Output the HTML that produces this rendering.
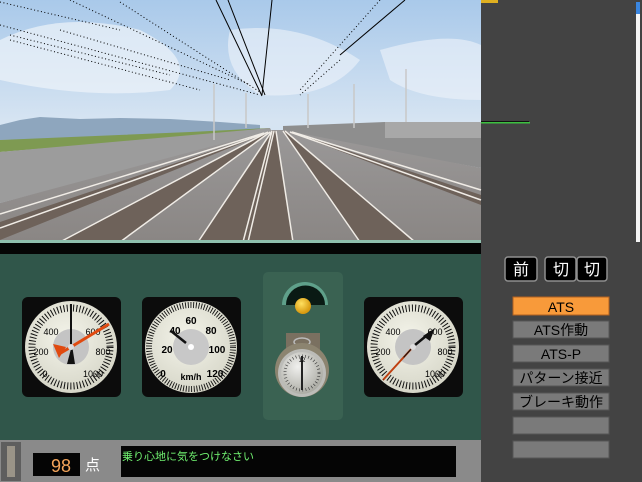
<!DOCTYPE html>
<html><head><meta charset="utf-8"><style>
html,body{margin:0;padding:0;background:#434343;}
svg{display:block}
text{font-family:"Liberation Sans","Noto Sans CJK JP",sans-serif}
</style></head><body>
<svg width="642" height="482" viewBox="0 0 642 482" xmlns="http://www.w3.org/2000/svg">
<defs>
<linearGradient id="sky" x1="0" y1="0" x2="0" y2="1">
<stop offset="0" stop-color="#a9c9ea"/><stop offset="0.5" stop-color="#d6e4f2"/><stop offset="1" stop-color="#c8dcee"/></linearGradient>
<linearGradient id="gnd" x1="0" y1="0" x2="0" y2="1">
<stop offset="0" stop-color="#9a9898"/><stop offset="1" stop-color="#8a8684"/></linearGradient>
<radialGradient id="face" cx="0.45" cy="0.4" r="0.6"><stop offset="0" stop-color="#f4f4ea"/><stop offset="1" stop-color="#d6d6c8"/></radialGradient>
<radialGradient id="lamp" cx="0.4" cy="0.35" r="0.6"><stop offset="0" stop-color="#ffe060"/><stop offset="1" stop-color="#d89a10"/></radialGradient>
<radialGradient id="watch" cx="0.4" cy="0.35" r="0.7"><stop offset="0" stop-color="#f0f0ee"/><stop offset="1" stop-color="#a8a8a0"/></radialGradient>
</defs>
<rect x="0" y="0" width="642" height="482" fill="#434343"/>
<rect x="481" y="0" width="17" height="3" fill="#e0b020"/>
<rect x="481" y="121" width="48" height="1" fill="#111"/>
<rect x="481" y="122" width="49" height="1.5" fill="#3cc040"/>
<rect x="636" y="2" width="4" height="240" fill="#f4f4f4"/>
<rect x="636" y="2" width="4" height="12" fill="#3a86e0"/>
<!-- scene -->
<rect x="0" y="0" width="481" height="242" fill="url(#sky)"/>
<path d="M0 40 Q60 10 140 30 Q200 60 170 90 Q90 100 0 80Z" fill="#eef4fa" opacity="0.7"/>
<path d="M230 30 Q300 20 360 60 Q330 100 260 95 Q220 70 230 30Z" fill="#eef4fa" opacity="0.6"/>
<path d="M380 50 Q450 30 481 45 L481 100 Q420 100 390 80Z" fill="#eef4fa" opacity="0.6"/>
<path d="M0 125 L20 120 L40 117 L80 119 L120 118 L170 119 L220 122 L260 125 L260 136 L0 140Z" fill="#8ea6be"/>
<path d="M0 140 L190 132 L270 128 L270 130 L0 152Z" fill="#7e9a52"/>
<path d="M0 152 L270 128 L272 132 L0 203Z" fill="#9c9c9c"/>
<path d="M283 126 L385 122 L481 122 L481 168 L283 132Z" fill="#8e8e8e"/>
<rect x="385" y="122" width="96" height="16" fill="#a8a8a8"/>
<path d="M0 203 L272 130 L283 130 L481 168 L481 242 L0 242Z" fill="url(#gnd)"/>
<!-- tie beds -->
<g fill="#6e625a">
<path d="M272 131 L276 131 L293 242 L198 242Z"/>
<path d="M283 131 L286 131 L415 242 L360 242Z"/>
<path d="M268 132 L270 132 L120 242 L60 242Z"/>
<path d="M265 133 L267 133 L0 240 L0 222Z"/>
<path d="M290 132 L292 132 L481 195 L481 205Z"/>
</g>
<g stroke="#f0ece6" stroke-width="1.5" fill="none">
<path d="M272 131 L198 242"/><path d="M272 131 L243 242"/><path d="M274 131 L248 242"/><path d="M276 131 L293 242"/>
<path d="M283 131 L360 242"/><path d="M285 131 L415 242"/>
<path d="M270 132 L120 242"/><path d="M268 132 L60 242"/><path d="M266 133 L0 228"/><path d="M264 133 L0 214"/>
<path d="M290 132 L481 200"/><path d="M292 132 L481 190"/>
</g>
<g stroke="#c8c8c8" stroke-width="1.5">
<path d="M214 84 L214 140"/><path d="M246 93 L246 128"/><path d="M354 84 L354 128"/><path d="M406 69 L406 122"/><path d="M308 94 L308 128"/>
</g>
<g stroke="#000" stroke-width="1" fill="none" stroke-dasharray="1 2.5">
<path d="M0 25 L260 95"/><path d="M10 40 L200 90"/><path d="M70 0 L250 85"/><path d="M120 2 L260 92"/><path d="M0 2 L120 30"/>
<path d="M10 35 L170 75"/><path d="M60 30 L230 80"/>
<path d="M380 0 L300 90"/><path d="M340 60 L300 95"/>
</g>
<g stroke="#000" stroke-width="1" fill="none">
<path d="M216 0 L262 96"/><path d="M228 0 L265 95"/><path d="M272 0 L262 95"/><path d="M405 0 L340 55"/>
</g>
<rect x="0" y="240" width="481" height="3" fill="#8fbfae"/>
<!-- cab -->
<rect x="0" y="243" width="481" height="11" fill="#050505"/>
<rect x="0" y="254" width="481" height="186" fill="#30564a"/>
<g transform="translate(71,347)">
<rect x="-49" y="-50" width="99" height="100" rx="6" fill="#0c0c0c"/>
<circle cx="0" cy="0" r="46" fill="url(#face)"/>
<circle cx="0" cy="0" r="39" fill="none" stroke="#111" stroke-width="7" stroke-dasharray="1 2.2"/>
<circle cx="0" cy="0" r="18" fill="#c4c4c4"/>
<g font-size="9" text-anchor="middle">
<text x="-20" y="-12">400</text><text x="22" y="-12">600</text>
<text x="-30" y="8">200</text><text x="32" y="8">800</text>
<text x="-26" y="30">0</text><text x="22" y="30">1000</text></g>
<path d="M0 0 L38 -23" stroke="#e04a10" stroke-width="3"/><path d="M-18 -3 L-12 11 L-5 0Z" fill="#e04a10"/>
<path d="M0 0 L-12 7" stroke="#e04a10" stroke-width="3"/>
<path d="M0 -43 L0 0" stroke="#111" stroke-width="2"/><path d="M-4 17 L4 17 L1 -2 Z" fill="#111"/>
<circle r="3" fill="#ddd"/>
</g>
<g transform="translate(191,347)">
<rect x="-49" y="-50" width="99" height="100" rx="6" fill="#0c0c0c"/>
<circle cx="0" cy="0" r="46" fill="url(#face)"/>
<circle cx="0" cy="0" r="42" fill="none" stroke="#111" stroke-width="6" stroke-dasharray="0.9 1.8"/>
<circle cx="0" cy="0" r="18" fill="#c8c8c8"/>
<g font-size="10" font-weight="bold" text-anchor="middle">
<text x="0" y="-23">60</text><text x="-16" y="-13">40</text><text x="20" y="-13">80</text>
<text x="-24" y="6">20</text><text x="26" y="6">100</text><text x="-28" y="30">0</text><text x="24" y="30">120</text>
<text x="0" y="33" font-size="9">km/h</text></g>
<path d="M-5 -4 L-20 -16" stroke="#111" stroke-width="2.5"/>
<circle r="3" fill="#fff"/>
</g>
<rect x="263" y="272" width="80" height="148" rx="5" fill="#3a6252"/>
<path d="M282 305 A21 21 0 0 1 328 305 L325 305 A18 18 0 0 0 286 305Z" fill="#5fa08a"/>
<path d="M286 305 A18 18 0 0 1 325 305Z" fill="#0a1a14"/>
<circle cx="303" cy="306" r="8" fill="url(#lamp)"/>
<rect x="286" y="333" width="34" height="18" fill="#7a7060"/>
<ellipse cx="302" cy="342" rx="8" ry="4" fill="none" stroke="#bbb" stroke-width="1.5"/>
<circle cx="302" cy="370" r="27" fill="#8c8470"/>
<circle cx="302" cy="373" r="24" fill="#bcbcb8"/>
<circle cx="302" cy="373" r="21" fill="url(#watch)"/>
<circle cx="302" cy="373" r="17" fill="none" stroke="#333" stroke-width="3" stroke-dasharray="0.6 2.6"/>
<path d="M302 356 L302 390" stroke="#222" stroke-width="2"/>
<text x="302" y="362" font-size="6" text-anchor="middle">12</text>
<g transform="translate(413,347)">
<rect x="-49" y="-50" width="99" height="100" rx="6" fill="#0c0c0c"/>
<circle cx="0" cy="0" r="46" fill="url(#face)"/>
<circle cx="0" cy="0" r="39" fill="none" stroke="#111" stroke-width="7" stroke-dasharray="1 2.2"/>
<circle cx="0" cy="0" r="18" fill="#c4c4c4"/>
<g font-size="9" text-anchor="middle">
<text x="-20" y="-12">400</text><text x="22" y="-12">600</text>
<text x="-30" y="8">200</text><text x="32" y="8">800</text>
<text x="22" y="30">1000</text></g>
<path d="M0 0 L-30 33" stroke="#c04010" stroke-width="2"/>
<path d="M0 0 L-30 33" stroke="#111" stroke-width="1" stroke-dasharray="14 30"/>
<path d="M2 -2 L18 -15" stroke="#111" stroke-width="2.5"/><path d="M10 -11 L22 -19 L17 -6Z" fill="#111"/>
<circle r="3" fill="#ddd"/>
</g>
<rect x="0" y="440" width="481" height="42" fill="#8a8a8a"/>
<rect x="1" y="442" width="20" height="39" fill="#5e5e5e"/>
<rect x="7" y="446" width="8" height="31" fill="#9a9488"/>
<rect x="33" y="453" width="47" height="23" fill="#050505"/>
<text x="71" y="472" font-size="18" fill="#f4a45a" text-anchor="end">98</text>
<text x="85" y="470" font-size="15" fill="#fff">点</text>
<rect x="121" y="446" width="335" height="31" fill="#050505"/>
<text x="122" y="460" font-size="11" fill="#70f070">乗り心地に気をつけなさい</text>
<g fill="#000" stroke="#909090" stroke-width="1.5">
<rect x="505" y="257" width="32" height="24" rx="3"/><rect x="545" y="257" width="31" height="24" rx="3"/><rect x="577" y="257" width="30" height="24" rx="3"/>
</g>
<g fill="#fff" font-size="16" text-anchor="middle">
<text x="521" y="275">前</text><text x="561" y="275">切</text><text x="592" y="275">切</text></g>
<rect x="513" y="297" width="96" height="18" fill="#f89a3a" stroke="#b06020"/>
<g fill="#7a7a7a" stroke="#555">
<rect x="513" y="321" width="96" height="17"/><rect x="513" y="345" width="96" height="17"/><rect x="513" y="369" width="96" height="17"/>
<rect x="513" y="393" width="96" height="17"/><rect x="513" y="417" width="96" height="17"/><rect x="513" y="441" width="96" height="17"/>
</g>
<g fill="#000" font-size="14" text-anchor="middle">
<text x="561" y="312">ATS</text><text x="561" y="335">ATS作動</text><text x="561" y="359">ATS-P</text>
<text x="561" y="383">パターン接近</text><text x="561" y="407">ブレーキ動作</text></g>
</svg>
</body></html>
